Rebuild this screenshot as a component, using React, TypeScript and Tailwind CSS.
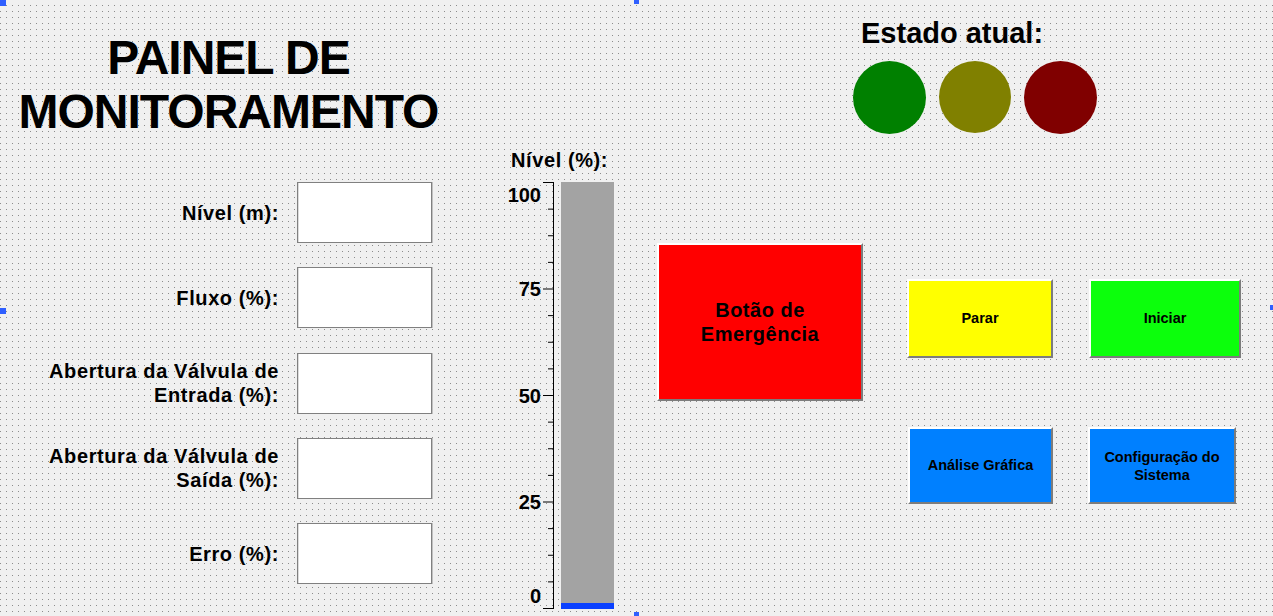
import React from "react";

const labels: { text: React.ReactNode }[] = [
  { text: "Nível (m):" },
  { text: "Fluxo (%):" },
  { text: (<>Abertura da Válvula de<br />Entrada (%):</>) },
  { text: (<>Abertura da Válvula de<br />Saída (%):</>) },
  { text: "Erro (%):" },
];

function Axis() {
  const H = 427;
  const ticks: React.ReactNode[] = [];
  for (let i = 0; i <= 16; i++) {
    const y = Math.min(0.5 + (i * (H - 1)) / 16, H - 0.5);
    const major = i % 4 === 0;
    ticks.push(
      <line key={i} x1={major ? 46 : 51} x2={56.5} y1={y} y2={y} stroke="#000" strokeWidth={1} />
    );
  }
  const lbls = [
    { t: "100", y: 20 },
    { t: "75", y: 114 },
    { t: "50", y: 221 },
    { t: "25", y: 327 },
    { t: "0", y: 421 },
  ];
  return (
    <svg width={60} height={428} className="block shrink-0">
      <line x1={56.5} x2={56.5} y1={0} y2={427} stroke="#000" strokeWidth={1} />
      {ticks}
      {lbls.map((l) => (
        <text
          key={l.t}
          x={44}
          y={l.y}
          textAnchor="end"
          fontFamily="'Liberation Sans', Arial, sans-serif"
          fontWeight="bold"
          fontSize="20"
          fill="#000"
        >
          {l.t}
        </text>
      ))}
    </svg>
  );
}

const btn3d = "border-t-2 border-l-2 border-t-white border-l-white border-r-2 border-b-2 border-r-[#7c7c7c] border-b-[#7c7c7c]";

export default function App() {
  return (
    <div
      className="relative w-[1273px] h-[616px] overflow-hidden flex text-black font-['Liberation_Sans',Arial,sans-serif] bg-[#8c8c8c] [background-image:linear-gradient(to_bottom,transparent_1px,#f0f0f0_1px),linear-gradient(to_right,transparent_1px,#f0f0f0_1px)] [background-size:6px_6px] [background-position:0_5px]"
    >
      {/* Column A */}
      <div className="w-[457px] shrink-0 flex flex-col">
        <div className="pt-[31px] text-center text-[48px] leading-[54px] font-bold tracking-[-1px]">
          PAINEL DE
          <br />
          MONITORAMENTO
        </div>
        <div className="mt-[43px] flex flex-col gap-[24.25px]">
          {labels.map((l, i) => (
            <div key={i} className="flex items-center h-[61px]">
              <div className="w-[279px] text-right text-[20px] leading-[24px] font-bold tracking-[0.6px]">
                {l.text}
              </div>
              <div className="ml-[18px] w-[135px] h-[61px] bg-white border border-[#808080] shadow-[inset_1px_0_0_#dcdcdc,1px_0_0_#c0c0c0]" />
            </div>
          ))}
        </div>
      </div>

      {/* Column B */}
      <div className="w-[175px] shrink-0 flex flex-col pt-[148px]">
        <div className="pl-[54px] text-[20px] leading-[24px] font-bold tracking-[0.6px] whitespace-nowrap">
          Nível (%):
        </div>
        <div className="mt-[10px] flex">
          <div className="ml-[40px]">
            <Axis />
          </div>
          <div className="ml-[4px] w-[53px] h-[427px] bg-[#a3a3a3] flex flex-col justify-end">
            <div className="h-[6px] bg-[#0a40ff]" />
          </div>
        </div>
      </div>

      {/* Column C */}
      <div className="flex-1 flex flex-col pt-[16px]">
        <div className="pl-[221px]">
          <div className="pl-[8px] text-[29px] leading-[34px] font-bold whitespace-nowrap">Estado atual:</div>
          <div className="mt-[11px] flex gap-[13px]">
            <div className="w-[73px] h-[73px] rounded-full bg-[#008000]" />
            <div className="w-[72px] h-[72px] rounded-full bg-[#808000]" />
            <div className="w-[73px] h-[73px] rounded-full bg-[#800000]" />
          </div>
        </div>
        <div className="mt-[109px] pl-[25px] flex items-start">
          <div
            className={`w-[206px] h-[158px] bg-[#ff0000] ${btn3d} flex items-center justify-center text-center text-[20px] leading-[24px] font-bold tracking-[0.5px]`}
          >
            Botão de
            <br />
            Emergência
          </div>
          <div className="ml-[44px] mt-[36px] flex flex-col">
            <div className="flex">
              <div className={`w-[146px] h-[79px] bg-[#ffff00] ${btn3d} flex items-center justify-center text-[14.5px] font-bold`}>
                Parar
              </div>
              <div className={`ml-[36px] w-[152px] h-[79px] bg-[#0cff0c] ${btn3d} flex items-center justify-center text-[14.5px] font-bold`}>
                Iniciar
              </div>
            </div>
            <div className="mt-[69px] flex">
              <div className={`ml-[1px] w-[145px] h-[77px] bg-[#0080ff] ${btn3d} flex items-center justify-center text-[14.5px] font-bold`}>
                Análise Gráfica
              </div>
              <div className={`ml-[35px] w-[148px] h-[77px] bg-[#0080ff] ${btn3d} flex items-center justify-center text-center text-[14.5px] leading-[18px] font-bold`}>
                Configuração do
                <br />
                Sistema
              </div>
            </div>
          </div>
        </div>
      </div>

      {/* selection handles */}
      <div className="absolute left-0 top-0 w-[6px] h-[6px] bg-[#2f5fff]" />
      <div className="absolute left-[634px] top-0 w-[5px] h-[4px] bg-[#2f5fff]" />
      <div className="absolute left-0 top-[308px] w-[6px] h-[6px] bg-[#2f5fff]" />
      <div className="absolute left-[1270px] top-[305px] w-[5px] h-[5px] bg-[#2f5fff]" />
      <div className="absolute left-[634px] top-[612px] w-[5px] h-[5px] bg-[#2f5fff]" />
    </div>
  );
}
